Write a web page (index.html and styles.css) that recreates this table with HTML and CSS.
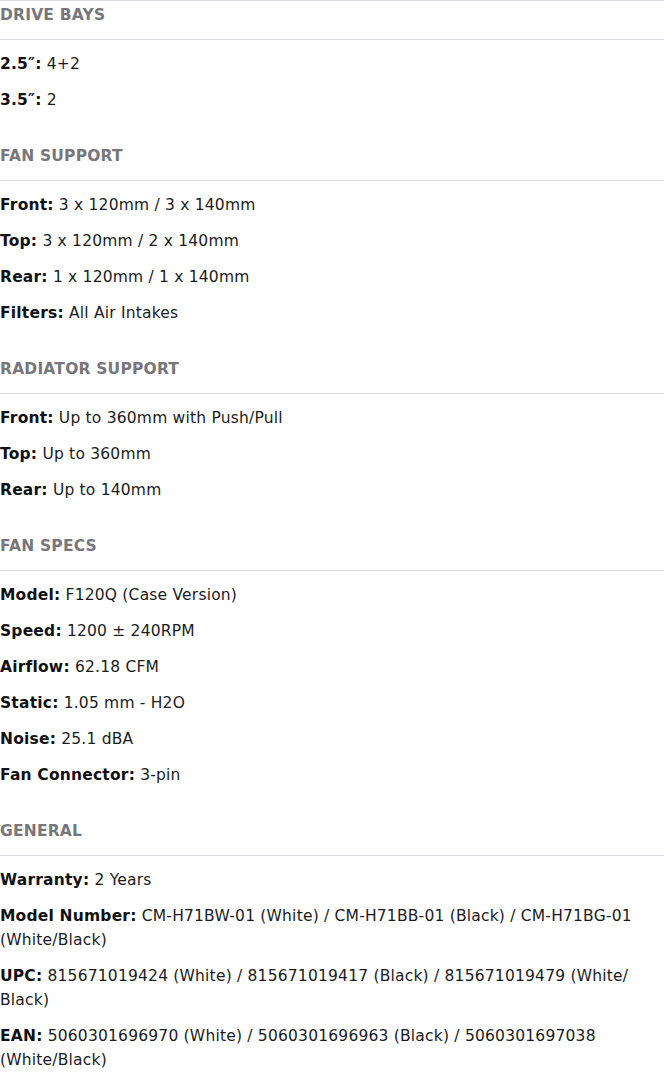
FILE: index.html
```html
<!DOCTYPE html>
<html lang="en">
<head>
<meta charset="utf-8">
<title>Specifications</title>
<link rel="stylesheet" href="styles.css">
</head>
<body>
<div class="specs">
  <section class="spec-group">
    <h3 class="spec-title">DRIVE BAYS</h3>
    <ul class="spec-list">
      <li><b>2.5″:</b> 4+2</li>
      <li><b>3.5″:</b> 2</li>
    </ul>
  </section>
  <section class="spec-group">
    <h3 class="spec-title">FAN SUPPORT</h3>
    <ul class="spec-list">
      <li><b>Front:</b> 3 x 120mm / 3 x 140mm</li>
      <li><b>Top:</b> 3 x 120mm / 2 x 140mm</li>
      <li><b>Rear:</b> 1 x 120mm / 1 x 140mm</li>
      <li><b>Filters:</b> All Air Intakes</li>
    </ul>
  </section>
  <section class="spec-group">
    <h3 class="spec-title">RADIATOR SUPPORT</h3>
    <ul class="spec-list">
      <li><b>Front:</b> Up to 360mm with Push/Pull</li>
      <li><b>Top:</b> Up to 360mm</li>
      <li><b>Rear:</b> Up to 140mm</li>
    </ul>
  </section>
  <section class="spec-group">
    <h3 class="spec-title">FAN SPECS</h3>
    <ul class="spec-list">
      <li><b>Model:</b> F120Q (Case Version)</li>
      <li><b>Speed:</b> 1200 ± 240RPM</li>
      <li><b>Airflow:</b> 62.18 CFM</li>
      <li><b>Static:</b> 1.05 mm - H2O</li>
      <li><b>Noise:</b> 25.1 dBA</li>
      <li><b>Fan Connector:</b> 3-pin</li>
    </ul>
  </section>
  <section class="spec-group">
    <h3 class="spec-title">GENERAL</h3>
    <ul class="spec-list">
      <li><b>Warranty:</b> 2 Years</li>
      <li><b>Model Number:</b> CM-H71BW-01 (White) / CM-H71BB-01 (Black) / CM-H71BG-01 (White/Black)</li>
      <li><b>UPC:</b> 815671019424 (White) / 815671019417 (Black) / 815671019479 (White/<wbr>Black)</li>
      <li><b>EAN:</b> 5060301696970 (White) / 5060301696963 (Black) / 5060301697038 (White/Black)</li>
    </ul>
  </section>
</div>
</body>
</html>
```
FILE: styles.css
```css
html, body {
  margin: 0;
  padding: 0;
  background: #ffffff;
}
body {
  font-family: "DejaVu Sans", "Open Sans", sans-serif;
  color: #1b1b1d;
}
.specs {
  border-top: 1px solid #dedce4;
}
.spec-group {
  padding-bottom: 24px;
}
.spec-title {
  margin: 0;
  padding: 1px 0 10px;
  font-size: 15.5px;
  line-height: 27px;
  font-weight: 700;
  color: #77767b;
  letter-spacing: 0.2px;
  border-bottom: 1px solid #dedce4;
}
.spec-list {
  list-style: none;
  margin: 0;
  padding: 6px 0 0;
}
.spec-list li {
  padding: 6px 0;
  font-size: 15.5px;
  line-height: 24px;
  letter-spacing: 0.2px;
}
.spec-list b {
  font-weight: 700;
  color: #111113;
}
```
